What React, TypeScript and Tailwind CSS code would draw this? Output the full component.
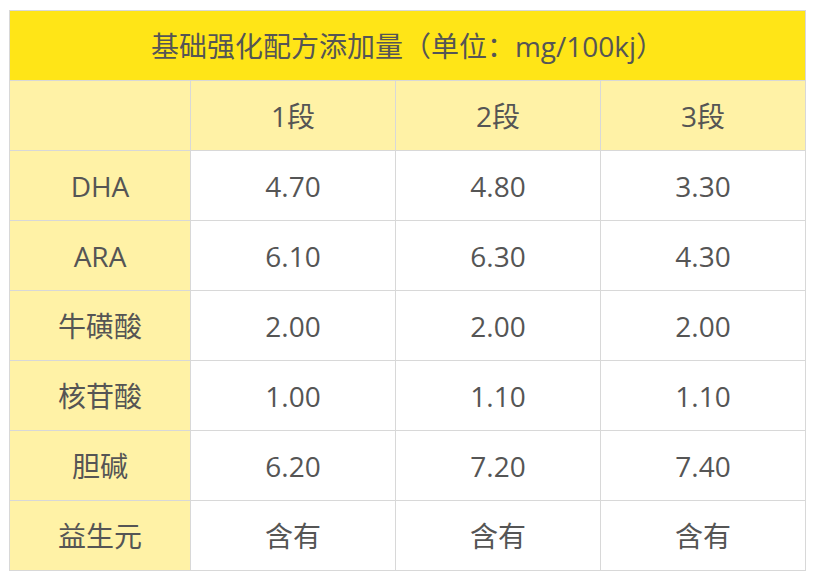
import React from 'react';

const rows: [string, string, string, string][] = [
  ['DHA', '4.70', '4.80', '3.30'],
  ['ARA', '6.10', '6.30', '4.30'],
  ['牛磺酸', '2.00', '2.00', '2.00'],
  ['核苷酸', '1.00', '1.10', '1.10'],
  ['胆碱', '6.20', '7.20', '7.40'],
  ['益生元', '含有', '含有', '含有'],
];

const cell = 'h-[70px] border border-[#d8d8d8] text-center align-middle p-0';

const App: React.FC = () => {
  return (
    <div className="w-[817px] h-[579px] bg-white pt-[10px] pl-[9px]">
      <table
        className="border-collapse table-fixed w-[796px] text-[28px] text-[#555555] leading-none"
        style={{ fontFamily: '"Open Sans", "Noto Sans CJK SC", sans-serif' }}
      >
        <colgroup>
          <col className="w-[181px]" />
          <col className="w-[205px]" />
          <col className="w-[205px]" />
          <col className="w-[205px]" />
        </colgroup>
        <tbody>
          <tr>
            <td colSpan={4} className={`${cell} bg-[#ffe517]`}>
              基础强化配方添加量（单位：mg/100kj）
            </td>
          </tr>
          <tr className="bg-[#fff2a6]">
            <td className={cell}></td>
            <td className={cell}>1段</td>
            <td className={cell}>2段</td>
            <td className={cell}>3段</td>
          </tr>
          {rows.map((r) => (
            <tr key={r[0]}>
              <td className={`${cell} bg-[#fff2a6]`}>{r[0]}</td>
              <td className={`${cell} bg-white`}>{r[1]}</td>
              <td className={`${cell} bg-white`}>{r[2]}</td>
              <td className={`${cell} bg-white`}>{r[3]}</td>
            </tr>
          ))}
        </tbody>
      </table>
    </div>
  );
};

export default App;
